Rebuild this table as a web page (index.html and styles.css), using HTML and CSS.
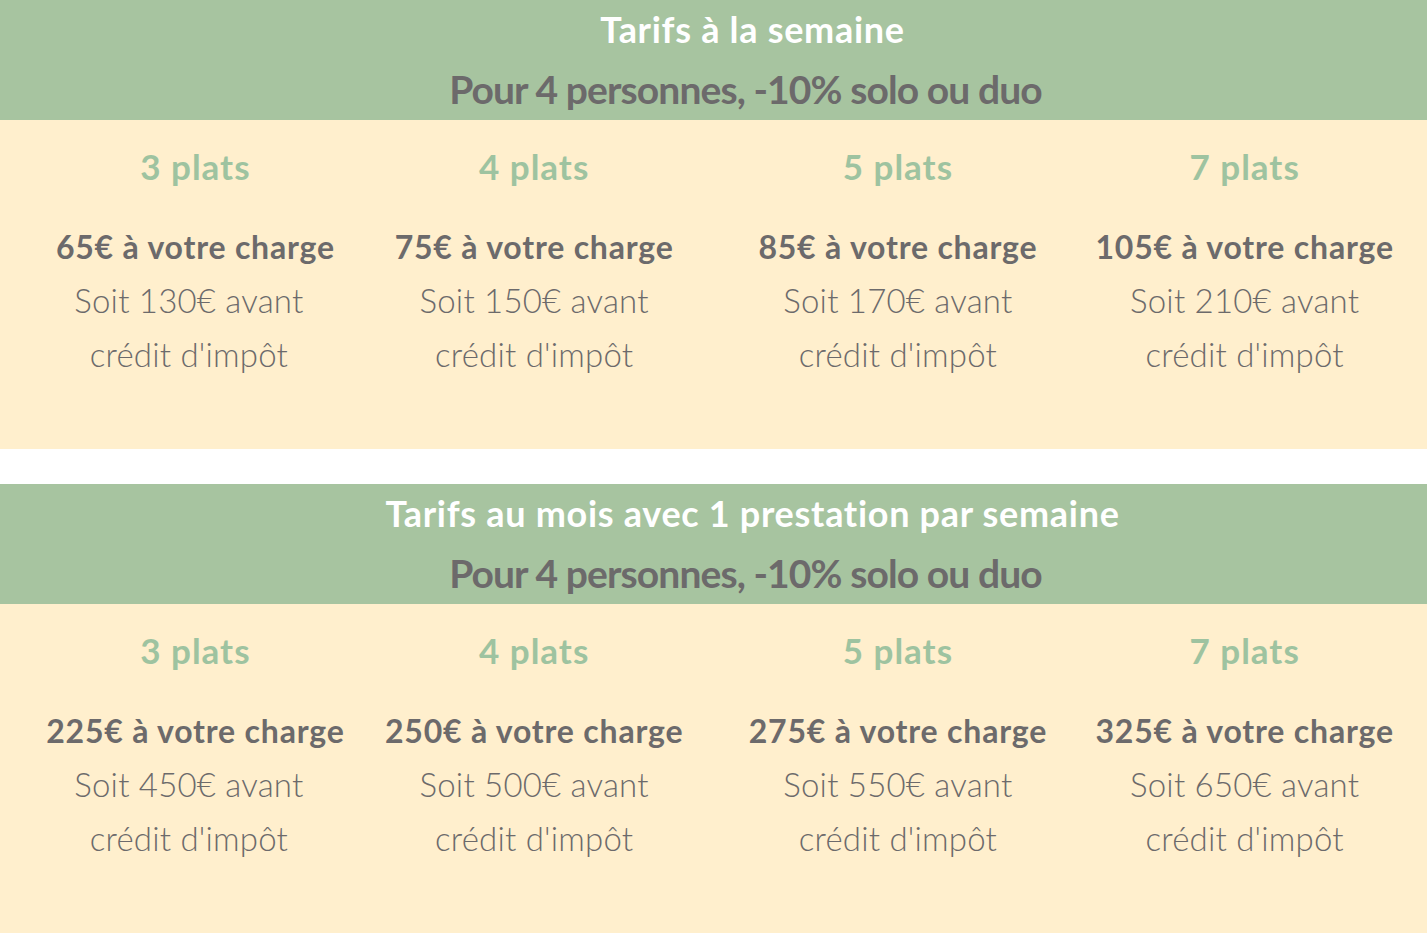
FILE: index.html
```html
<!DOCTYPE html>
<html lang="fr">
<head>
<meta charset="utf-8">
<title>Tarifs</title>
<link rel="stylesheet" href="styles.css">
</head>
<body>
<section class="pricing">
  <header class="band">
    <h2 class="band-title">Tarifs à la semaine</h2>
    <p class="band-sub">Pour 4 personnes, -10% solo ou duo</p>
  </header>
  <div class="grid">
    <div class="col c1">
      <h3 class="plats">3 plats</h3>
      <p class="charge">65€ à votre charge</p>
      <p class="avant">Soit 130€ avant<br>crédit d'impôt</p>
    </div>
    <div class="col c2">
      <h3 class="plats">4 plats</h3>
      <p class="charge">75€ à votre charge</p>
      <p class="avant">Soit 150€ avant<br>crédit d'impôt</p>
    </div>
    <div class="col c3">
      <h3 class="plats">5 plats</h3>
      <p class="charge">85€ à votre charge</p>
      <p class="avant">Soit 170€ avant<br>crédit d'impôt</p>
    </div>
    <div class="col c4">
      <h3 class="plats">7 plats</h3>
      <p class="charge">105€ à votre charge</p>
      <p class="avant">Soit 210€ avant<br>crédit d'impôt</p>
    </div>
  </div>
</section>

<section class="pricing second">
  <header class="band">
    <h2 class="band-title">Tarifs au mois avec 1 prestation par semaine</h2>
    <p class="band-sub">Pour 4 personnes, -10% solo ou duo</p>
  </header>
  <div class="grid">
    <div class="col c1">
      <h3 class="plats">3 plats</h3>
      <p class="charge">225€ à votre charge</p>
      <p class="avant">Soit 450€ avant<br>crédit d'impôt</p>
    </div>
    <div class="col c2">
      <h3 class="plats">4 plats</h3>
      <p class="charge">250€ à votre charge</p>
      <p class="avant">Soit 500€ avant<br>crédit d'impôt</p>
    </div>
    <div class="col c3">
      <h3 class="plats">5 plats</h3>
      <p class="charge">275€ à votre charge</p>
      <p class="avant">Soit 550€ avant<br>crédit d'impôt</p>
    </div>
    <div class="col c4">
      <h3 class="plats">7 plats</h3>
      <p class="charge">325€ à votre charge</p>
      <p class="avant">Soit 650€ avant<br>crédit d'impôt</p>
    </div>
  </div>
</section>
</body>
</html>
```

FILE: styles.css
```css
html, body {
  margin: 0;
  padding: 0;
  background: #ffffff;
}

body {
  font-family: Lato, "Open Sans", "Liberation Sans", sans-serif;
  color: #6c6a6b;
}

.pricing {
  background: #ffefcd;
  padding-bottom: 68px;
}

.pricing.second {
  margin-top: 35px;
}

.band {
  background: #a7c4a0;
  text-align: center;
  padding-left: 64px;
}

.band-title {
  margin: 0;
  padding-left: 14px;
  font-size: 36px;
  font-weight: 700;
  line-height: 59px;
  letter-spacing: 0.7px;
  color: #ffffff;
}

.band-sub {
  margin: 0;
  font-size: 39px;
  font-weight: 700;
  line-height: 61px;
  letter-spacing: -0.9px;
  color: #6c6a6b;
}

.grid {
  display: grid;
  grid-template-columns: repeat(4, 1fr);
  padding-top: 19px;
}

.col {
  text-align: center;
}

.c1 { padding-left: 34px; }
.c2 { padding-right: 2px; }
.c3 { padding-left: 12px; }
.c4 { padding-right: 8px; }

.c1 .avant { padding-right: 13px; }

.plats {
  margin: 0;
  font-size: 35px;
  font-weight: 700;
  line-height: 54px;
  letter-spacing: 1px;
  color: #9ec3a0;
}

.charge {
  margin: 27px 0 0;
  font-size: 32px;
  font-weight: 700;
  line-height: 54px;
  letter-spacing: 0.8px;
  color: #6c6a6b;
}

.avant {
  margin: -1px 0 0;
  font-size: 33px;
  font-weight: 300;
  line-height: 54px;
  letter-spacing: 0.2px;
  color: #6c6a6b;
}
```
